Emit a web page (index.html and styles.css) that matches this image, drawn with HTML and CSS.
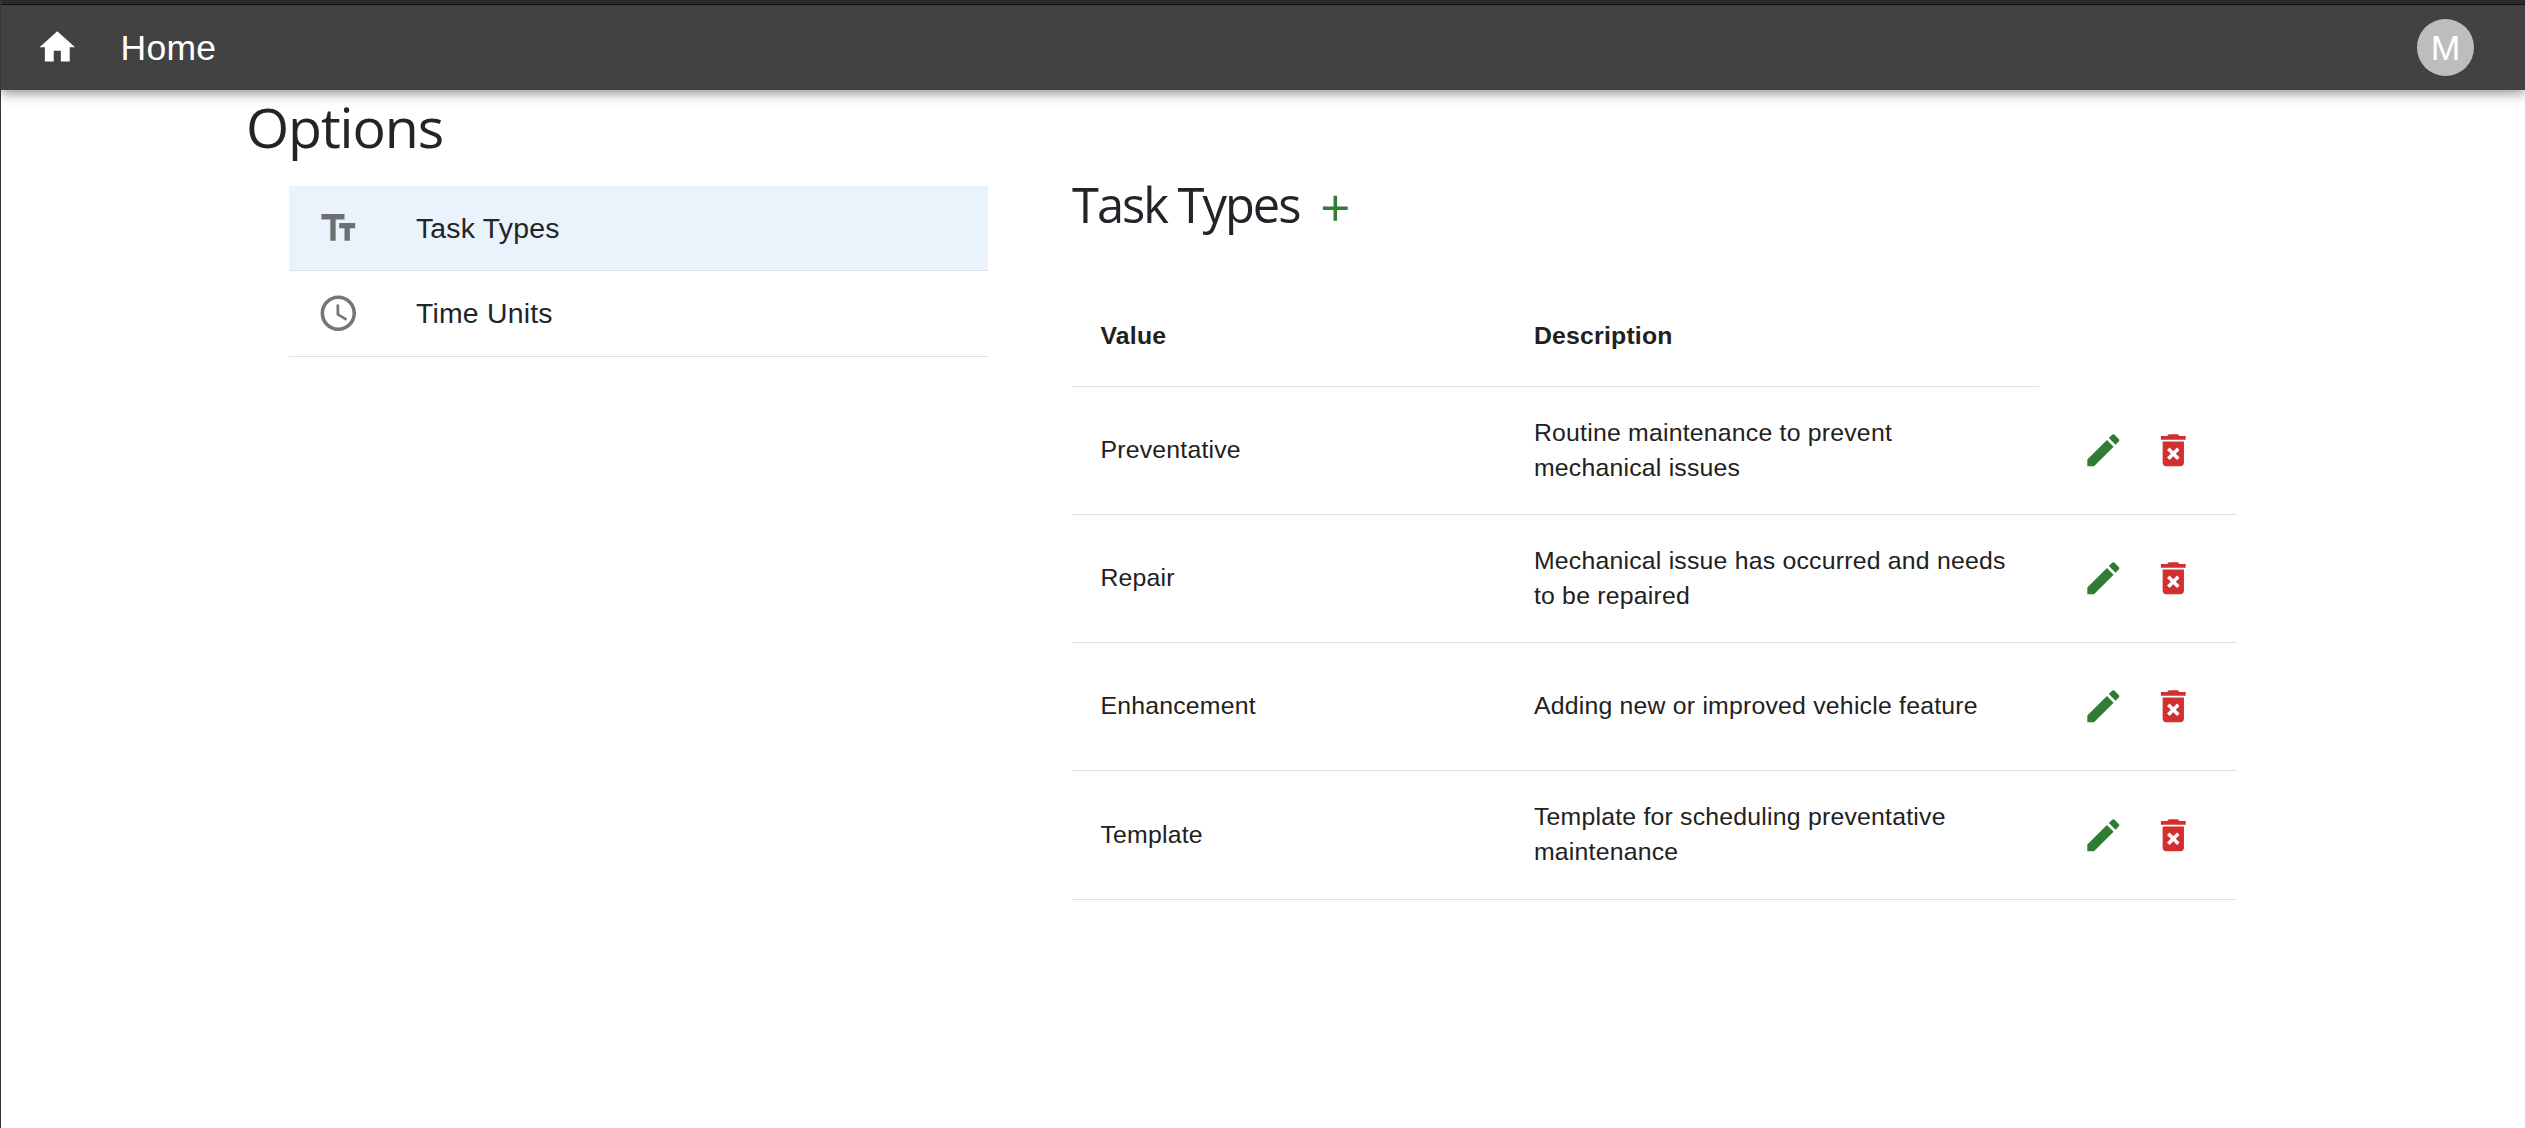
FILE: index.html
```html
<!DOCTYPE html>
<html lang="en">
<head>
<meta charset="utf-8">
<title>Options</title>
<link rel="stylesheet" href="styles.css">
</head>
<body>
<svg class="defs" width="0" height="0">
  <symbol id="edit" viewBox="0 0 24 24"><path d="M3 17.25V21h3.75L17.81 9.94l-3.75-3.75L3 17.25zM20.71 7.04c.39-.39.39-1.02 0-1.41l-2.34-2.34a.9959.9959 0 0 0-1.41 0l-1.83 1.83 3.75 3.75 1.83-1.83z"/></symbol>
  <symbol id="delete" viewBox="0 0 24 24"><path d="M6 19c0 1.1.9 2 2 2h8c1.1 0 2-.9 2-2V7H6v12zm2.46-7.12 1.41-1.41L12 12.59l2.12-2.12 1.41 1.41L13.41 14l2.12 2.12-1.41 1.41L12 15.41l-2.12 2.12-1.41-1.41L10.59 14l-2.13-2.12zM15.5 4l-1-1h-5l-1 1H5v2h14V4z"/></symbol>
</svg>
<header class="appbar">
  <svg class="icon" viewBox="0 0 24 24"><path d="M10 20v-6h4v6h5v-8h3L12 3 2 12h3v8z"/></svg>
  <span class="brand">Home</span>
  <div class="avatar">M</div>
</header>
<main class="page">
  <h2 class="title">Options</h2>
  <div class="columns">
    <nav class="list">
      <div class="item selected">
        <svg class="icon" viewBox="0 0 24 24"><path d="M2.5 4v3h5v12h3V7h5V4h-13zm19 5h-9v3h3v7h3v-7h3V9z"/></svg>
        <span>Task Types</span>
      </div>
      <div class="item">
        <svg class="icon" viewBox="0 0 24 24"><path d="M11.99 2C6.47 2 2 6.48 2 12s4.47 10 9.99 10C17.52 22 22 17.52 22 12S17.52 2 11.99 2zM12 20c-4.42 0-8-3.58-8-8s3.58-8 8-8 8 3.58 8 8-3.58 8-8 8zm.5-13H11v6l5.25 3.15.75-1.23-4.5-2.67z"/></svg>
        <span>Time Units</span>
      </div>
    </nav>
    <section class="panel">
      <div class="panel-head">
        <h3 class="subtitle">Task Types</h3>
        <svg class="icon green" viewBox="0 0 24 24"><path d="M19 13h-6v6h-2v-6H5v-2h6V5h2v6h6v2z"/></svg>
      </div>
      <div class="row head"><div class="cell value">Value</div><div class="cell desc">Description</div></div>
      <div class="row"><div class="cell value">Preventative</div><div class="cell desc">Routine maintenance to prevent<br>mechanical issues</div><div class="actions"><svg class="icon green"><use href="#edit"/></svg><svg class="icon red"><use href="#delete"/></svg></div></div>
      <div class="row"><div class="cell value">Repair</div><div class="cell desc">Mechanical issue has occurred and needs<br>to be repaired</div><div class="actions"><svg class="icon green"><use href="#edit"/></svg><svg class="icon red"><use href="#delete"/></svg></div></div>
      <div class="row"><div class="cell value">Enhancement</div><div class="cell desc">Adding new or improved vehicle feature</div><div class="actions"><svg class="icon green"><use href="#edit"/></svg><svg class="icon red"><use href="#delete"/></svg></div></div>
      <div class="row last"><div class="cell value">Template</div><div class="cell desc">Template for scheduling preventative<br>maintenance</div><div class="actions"><svg class="icon green"><use href="#edit"/></svg><svg class="icon red"><use href="#delete"/></svg></div></div>
    </section>
  </div>
</main>
</body>
</html>
```
FILE: styles.css
```css
* { box-sizing: border-box; }
body {
  margin: 0;
  height: 1128px;
  overflow: hidden;
  background: #fff;
  border-left: 1px solid #353535;
  color: #212121;
  font-family: "Liberation Sans", Arial, sans-serif;
}
.defs { display: block; height: 0; }
.icon { width: 42.6px; height: 42.6px; fill: currentColor; flex: none; }
.green { color: #2e7d32; }
.red { color: #d32f2f; }

.appbar {
  display: flex;
  align-items: center;
  height: 90px;
  padding: 5px 51px 0 35px;
  background: linear-gradient(#2b2a33 4px, #101010 4px, #101010 5px, #424242 5px);
  color: #fff;
  box-shadow: 0 3.5px 7px -1.8px rgba(0,0,0,.2), 0 7px 9px rgba(0,0,0,.14), 0 1.8px 17.7px rgba(0,0,0,.12);
}
.brand { margin-left: 42px; padding-top: 1px; font-size: 35.5px; line-height: 57px; letter-spacing: .26px; }
.avatar {
  width: 57px;
  height: 57px;
  margin-left: auto;
  border-radius: 50%;
  background: #bdbdbd;
  font-size: 35.5px;
  line-height: 58px;
  text-align: center;
}

.page { padding-left: 245px; }
.title, .subtitle {
  margin: 0;
  color: #212529;
  font-family: "Open Sans", "Noto Sans", sans-serif;
  font-weight: 400;
}
.title { height: 95px; font-size: 55.5px; line-height: 73px; letter-spacing: -1.1px; }
.columns { display: flex; align-items: flex-start; gap: 84px; padding-left: 43px; }

.list { width: 699px; padding-top: 1px; }
.item {
  display: flex;
  align-items: center;
  gap: 56.3px;
  height: 86px;
  padding-left: 28px;
  border-bottom: 1px solid #e0e0e0;
  color: #757575;
  font-size: 28.4px;
  letter-spacing: .22px;
}
.item span { color: #212529; }
.selected { height: 85px; background: #eaf3fb; color: #6c7073; }

.panel { width: 1165px; padding-top: 1px; }
.panel-head { display: flex; align-items: center; gap: 15px; height: 101px; padding-bottom: 57px; }
.subtitle { width: 227px; padding-bottom: 8px; font-size: 48.8px; line-height: 68px; letter-spacing: -2px; white-space: nowrap; }
.row {
  display: flex;
  align-items: center;
  height: 128px;
  border-bottom: 1px solid #e0e0e0;
  font-size: 24.8px;
  line-height: 35px;
  letter-spacing: .22px;
}
.last { height: 129px; }
.head { width: 967px; height: 100px; font-weight: 700; }
.cell { padding: 0 0 1.5px 28.4px; white-space: nowrap; }
.value { width: 433.5px; }
.desc { width: 533.5px; }
.actions { display: flex; gap: 27px; padding-left: 43px; }
```
